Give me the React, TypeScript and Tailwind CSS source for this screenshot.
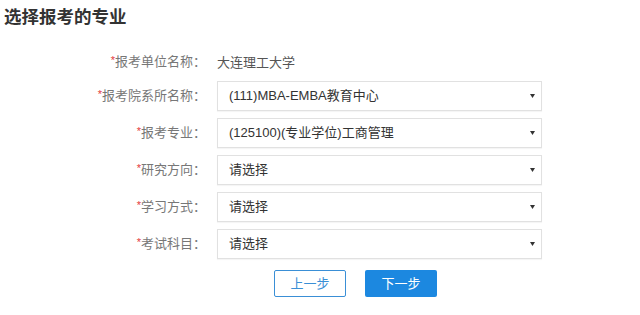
import React from "react";

const font = { fontFamily: '"Liberation Sans", "Noto Sans CJK SC", sans-serif' };

interface RowProps {
  label: string;
  children: React.ReactNode;
  tall?: boolean;
}

const Row: React.FC<RowProps> = ({ label, children, tall = true }) => (
  <div className={`flex items-center ${tall ? "h-[30px]" : "h-[24px]"}`}>
    <div className="w-[206px] shrink-0 text-right text-[13px] text-[#777]">
      <span className="text-[#e4393c] text-[11px] align-top">*</span>
      {label}：
    </div>
    <div className="ml-[11px]">{children}</div>
  </div>
);

const FakeSelect: React.FC<{ value: string }> = ({ value }) => (
  <div className="w-[325px] h-[30px] border border-[#e1e1e1] bg-white flex items-center justify-between pl-[11px] pr-[6px] text-[13px] text-[#333] shadow-[0_1px_1px_rgba(0,0,0,0.04)]">
    <span>{value}</span>
    <svg width="5" height="4" viewBox="0 0 5 4">
      <path d="M0 0H5L2.5 4Z" fill="#333" />
    </svg>
  </div>
);

export default function App() {
  return (
    <div className="w-[640px] h-[315px] bg-white overflow-hidden" style={font}>
      <h1 className="pl-[4px] pt-[5px] h-[50px] text-[17.5px] font-bold text-[#333] leading-[24px]">
        选择报考的专业
      </h1>
      <div className="flex flex-col gap-[7px]">
        <Row label="报考单位名称" tall={false}>
          <span className="text-[13px] text-[#555]">大连理工大学</span>
        </Row>
        <Row label="报考院系所名称">
          <FakeSelect value="(111)MBA-EMBA教育中心" />
        </Row>
        <Row label="报考专业">
          <FakeSelect value="(125100)(专业学位)工商管理" />
        </Row>
        <Row label="研究方向">
          <FakeSelect value="请选择" />
        </Row>
        <Row label="学习方式">
          <FakeSelect value="请选择" />
        </Row>
        <Row label="考试科目">
          <FakeSelect value="请选择" />
        </Row>
      </div>
      <div className="flex gap-[19px] pl-[274px] mt-[11px]">
        <button className="w-[72px] h-[27px] border border-[#3a8fd6] rounded-[2px] bg-white text-[#3a8fd6] text-[13px]">
          上一步
        </button>
        <button className="w-[72px] h-[27px] rounded-[2px] bg-[#1c88e0] text-white text-[13px]">
          下一步
        </button>
      </div>
    </div>
  );
}
